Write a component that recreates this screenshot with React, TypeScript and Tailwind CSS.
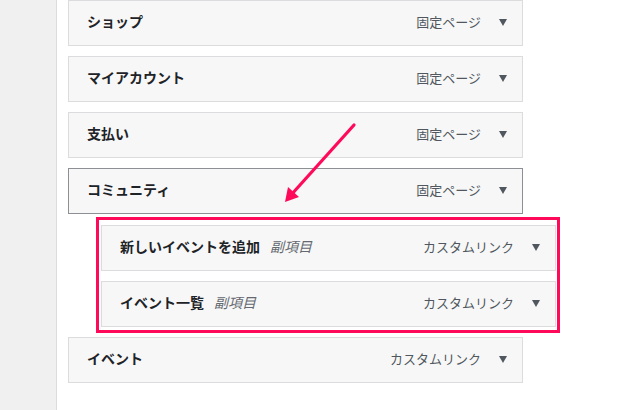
import React from "react";

const font = { fontFamily: '"Noto Sans CJK JP", "Noto Sans", sans-serif' };

function Tri() {
  return (
    <span className="ml-[18px] mt-[2px] inline-block h-0 w-0 border-x-[4px] border-t-[7px] border-x-transparent border-t-[#50575e]" />
  );
}

function Item({
  title,
  sub,
  type,
  active,
  className = "",
}: {
  title: string;
  sub?: string;
  type: string;
  active?: boolean;
  className?: string;
}) {
  return (
    <div
      className={`flex h-[46px] w-[455px] items-center justify-between border bg-[#f7f7f7] pb-[3px] pl-[18px] pr-[15px] ${
        active ? "border-[#8c8f94]" : "border-[#dcdcde]"
      } ${className}`}
    >
      <div className="flex items-center">
        <span className="text-[14px] font-bold text-[#1d2327]">{title}</span>
        {sub && <span className="ml-[10px] text-[14px] italic text-[#646970]">{sub}</span>}
      </div>
      <div className="flex items-center">
        <span className="text-[13px] text-[#50575e]">{type}</span>
        <Tri />
      </div>
    </div>
  );
}

export default function App() {
  return (
    <div className="relative flex h-[410px] w-[618px] overflow-hidden bg-white" style={font}>
      <div className="h-full w-[57px] shrink-0 border-r border-[#dcdcde] bg-[#f0f0f1]" />
      <div className="flex flex-col pl-[11px]">
        <Item title="ショップ" type="固定ページ" />
        <Item title="マイアカウント" type="固定ページ" className="mt-[10px]" />
        <Item title="支払い" type="固定ページ" className="mt-[10px]" />
        <Item title="コミュニティ" type="固定ページ" active className="mt-[10px]" />
        <div className="ml-[28px] mt-[3px] flex w-[464px] flex-col border-[3px] border-[#ff0a5a] pb-[3px] pl-[2px] pt-[5px]">
          <Item title="新しいイベントを追加" sub="副項目" type="カスタムリンク" />
          <Item title="イベント一覧" sub="副項目" type="カスタムリンク" className="mt-[10px]" />
        </div>
        <Item title="イベント" type="カスタムリンク" className="mt-[4px]" />
      </div>
      <svg className="absolute left-0 top-0" width="618" height="410">
        <line x1="354" y1="125" x2="291" y2="195" stroke="#ff0a5a" strokeWidth="3.2" strokeLinecap="round" />
        <polygon points="285,202 288,187 299,197" fill="#ff0a5a" />
      </svg>
    </div>
  );
}
